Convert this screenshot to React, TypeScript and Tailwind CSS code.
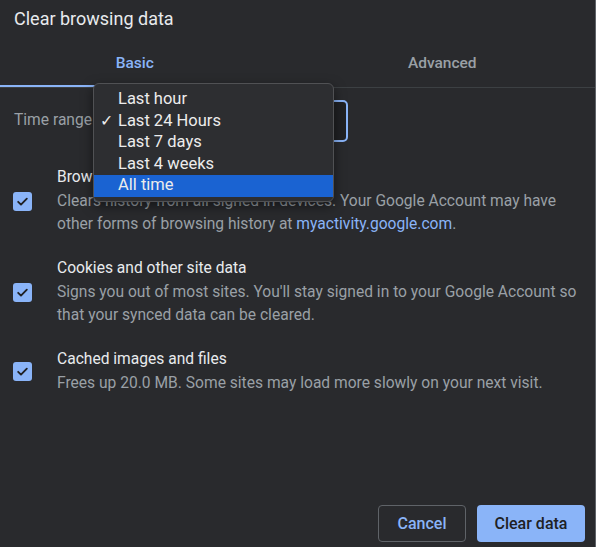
const items = ["Last hour", "Last 24 Hours", "Last 7 days", "Last 4 weeks", "All time"];

const rows = [
  {
    title: "Browsing history",
    desc: (
      <>
        Clears history from all signed in devices. Your Google Account may have other forms of browsing history at{" "}
        <span className="text-[#8ab4f8]">myactivity.google.com</span>.
      </>
    ),
  },
  {
    title: "Cookies and other site data",
    desc: "Signs you out of most sites. You'll stay signed in to your Google Account so that your synced data can be cleared.",
  },
  {
    title: "Cached images and files",
    desc: "Frees up 20.0 MB. Some sites may load more slowly on your next visit.",
  },
];

function Checkbox() {
  return (
    <div className="flex h-[19px] w-[19px] shrink-0 items-center justify-center rounded-[3px] bg-[#8ab4f8]">
      <svg width="13" height="13" viewBox="0 0 12 12" fill="none">
        <path d="M2 6.3l2.6 2.6L10 3.4" stroke="#202124" strokeWidth="1.7" strokeLinecap="round" strokeLinejoin="round" />
      </svg>
    </div>
  );
}

export default function App() {
  return (
    <div className="relative flex h-[547px] w-[596px] flex-col overflow-hidden border-r border-[#5f6368] bg-[#292a2d] font-['Roboto',sans-serif]">
      <h1 className="px-[14px] pt-[7px] text-[18px] leading-[24px] text-[#e8eaed]">Clear browsing data</h1>

      {/* tabs */}
      <div className="mt-[9px] flex h-[48px] border-b border-[#3c4043]">
        <div className="relative flex w-[270px] items-center justify-center text-[15.5px] font-medium text-[#8ab4f8]">
          Basic
          <div className="absolute bottom-0 left-0 h-[2px] w-full bg-[#8ab4f8]" />
        </div>
        <div className="ml-[20px] flex w-[306px] items-center justify-center text-[15.5px] font-medium text-[#9aa0a6]">
          Advanced
        </div>
      </div>

      {/* time range */}
      <div className="mt-[12px] flex items-center pl-[14px]">
        <span className="w-[86px] text-[15.6px] text-[#9aa0a6]">Time range</span>
        <div className="h-[42px] w-[248px] rounded-[5px] border-2 border-[#8ab4f8] bg-[#202124]" />
      </div>

      {/* options */}
      <div className="mt-[24px] flex flex-col gap-[21px]">
        {rows.map((r) => (
          <div key={r.title} className="flex items-center pl-[13px]">
            <Checkbox />
            <div className="ml-[25px] w-[530px]">
              <div className="text-[15.6px] leading-[22px] text-[#e8eaed]">{r.title}</div>
              <div className="mt-[2px] text-[15.6px] leading-[23px] text-[#9aa0a6]">{r.desc}</div>
            </div>
          </div>
        ))}
      </div>

      {/* buttons */}
      <div className="mt-auto flex justify-end gap-[11px] pb-[5px] pr-[10px]">
        <button className="h-[37px] w-[88px] rounded-[4px] border border-[#5f6368] text-[16px] font-medium text-[#8ab4f8]">
          Cancel
        </button>
        <button className="h-[37px] w-[108px] rounded-[4px] bg-[#8ab4f8] text-[16px] font-medium text-[#202124]">
          Clear data
        </button>
      </div>

      {/* open dropdown menu */}
      <div className="absolute left-[93px] top-[83px] w-[241px] rounded-[6px] border border-[#505154] bg-[#2d2e31] pb-[4px] pt-[5px] shadow-[0_4px_12px_rgba(0,0,0,0.5)]">
        {items.map((it, i) => (
          <div
            key={it}
            className={`flex h-[21.5px] items-center text-[16.5px] text-[#ececec] ${i === 4 ? "bg-[#1a63d2]" : ""}`}
          >
            <span className="w-[24px] pl-[6px] text-[16px]">{i === 1 ? "✓" : ""}</span>
            <span>{it}</span>
          </div>
        ))}
      </div>
    </div>
  );
}
